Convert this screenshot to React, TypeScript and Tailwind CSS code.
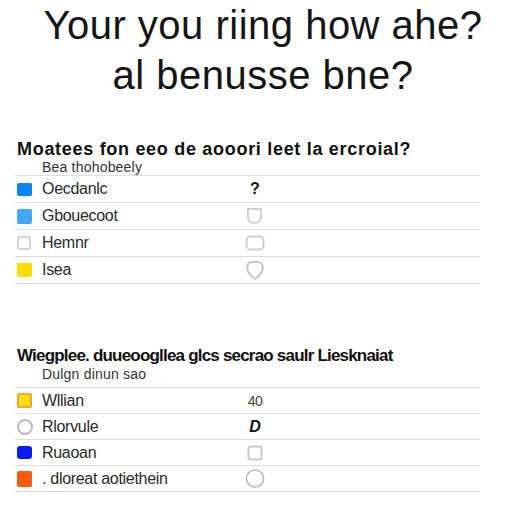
import React from "react";

type Marker = "blue" | "sky" | "empty" | "yellow" | "amber" | "ring" | "navy" | "orange";
type Answer = "q" | "shield" | "box" | "round" | "forty" | "d" | "square" | "circle";

type Row = { marker: Marker; label: string; answer: Answer };

const sections: {
  title: string;
  hint: string;
  rows: Row[];
  wrap: string;
  titleCls: string;
  hintCls: string;
  rowH: string;
}[] = [
  {
    title: "Moatees fon eeo de aooori leet la ercroial?",
    hint: "Bea thohobeely",
    wrap: "",
    titleCls: "text-[18px] tracking-[0.7px]",
    hintCls: "pb-0",
    rowH: "h-[27px]",
    rows: [
      { marker: "blue", label: "Oecdanlc", answer: "q" },
      { marker: "sky", label: "Gbouecoot", answer: "shield" },
      { marker: "empty", label: "Hemnr", answer: "box" },
      { marker: "yellow", label: "Isea", answer: "round" },
    ],
  },
  {
    title: "Wiegplee. duueoogllea glcs secrao saulr Liesknaiat",
    hint: "Dulgn dinun sao",
    wrap: "mt-[3px]",
    titleCls: "text-[17px] tracking-[-0.8px]",
    hintCls: "pb-[5px]",
    rowH: "h-[26px]",
    rows: [
      { marker: "amber", label: "Wllian", answer: "forty" },
      { marker: "ring", label: "Rlorvule", answer: "d" },
      { marker: "navy", label: "Ruaoan", answer: "square" },
      { marker: "orange", label: ". dloreat aotiethein", answer: "circle" },
    ],
  },
];

const MarkerIcon: React.FC<{ kind: Marker }> = ({ kind }) => {
  switch (kind) {
    case "blue":
      return <span className="block h-[13px] w-[15px] rounded-[2px] bg-[#0a84f5]" />;
    case "sky":
      return <span className="block h-[15px] w-[15px] rounded-[2px] bg-[#3fa9f7]" />;
    case "empty":
      return <span className="block h-[14px] w-[14px] rounded-[3px] border-2 border-[#d4d4d4] bg-white" />;
    case "yellow":
      return <span className="block h-[14px] w-[15px] rounded-[2px] bg-[#ffdc00]" />;
    case "amber":
      return <span className="block h-[15px] w-[15px] rounded-[2px] border-2 border-[#f2a33a] bg-[#ffe000]" />;
    case "ring":
      return <span className="block h-[16px] w-[16px] rounded-full border-2 border-[#b9b9b9] bg-white" />;
    case "navy":
      return <span className="block h-[13px] w-[15px] rounded-[3px] bg-[#0a1cf2]" />;
    case "orange":
      return <span className="block h-[16px] w-[15px] rounded-[2px] bg-[#ff5a12]" />;
  }
};

const AnswerIcon: React.FC<{ kind: Answer }> = ({ kind }) => {
  switch (kind) {
    case "q":
      return <span className="text-[16px] font-black leading-none text-[#111]">?</span>;
    case "forty":
      return <span className="text-[14px] leading-none tracking-[-0.5px] text-[#444]">40</span>;
    case "d":
      return <span className="text-[16px] font-black italic leading-none text-[#111]">D</span>;
    case "shield":
      return (
        <svg width="18" height="18" viewBox="0 0 18 18" fill="none" stroke="#cfcfcf" strokeWidth="2">
          <path d="M2 2h13v8c0 4-3 6-6.5 6S2 14 2 10z" strokeLinejoin="round" />
        </svg>
      );
    case "box":
      return (
        <svg width="20" height="16" viewBox="0 0 20 16" fill="none" stroke="#cdcdcd" strokeWidth="2">
          <rect x="1.5" y="1.5" width="17" height="13" rx="4" />
        </svg>
      );
    case "round":
      return (
        <svg width="20" height="22" viewBox="0 0 20 22" fill="none" stroke="#c7c7c7" strokeWidth="2">
          <path d="M3 5c2-3 12-3 14 0 2 4 0 11-7 15C3 16 1 9 3 5z" strokeLinejoin="round" />
        </svg>
      );
    case "square":
      return (
        <svg width="16" height="16" viewBox="0 0 16 16" fill="none" stroke="#c9c9c9" strokeWidth="2">
          <rect x="1.5" y="1.5" width="13" height="13" rx="2" />
        </svg>
      );
    case "circle":
      return (
        <svg width="21" height="21" viewBox="0 0 21 21" fill="none" stroke="#b5b5b5" strokeWidth="1.6">
          <circle cx="10.5" cy="10.5" r="9" />
        </svg>
      );
  }
};

export default function App() {
  return (
    <div className="h-[512px] w-[512px] overflow-hidden bg-white font-['Liberation_Sans',Arial,sans-serif] text-[#1a1a1a]">
      <h1 className="pl-[14px] text-center text-[40px] font-normal leading-[50px] tracking-[0.5px] text-[#151515]">
        Your you riing how ahe?
        <br />
        al benusse bne?
      </h1>

      <div className="mt-[38px] flex flex-col gap-[58px] pl-[15px] pr-[32px]">
        {sections.map((section, i) => (
          <div key={i} className={section.wrap}>
            <h2 className={`pl-[2px] font-bold leading-[22px] text-[#111] ${section.titleCls}`}>
              {section.title}
            </h2>
            <div
              className={`border-b border-[#dedede] pl-[27px] text-[14px] leading-[15px] tracking-[0.2px] text-[#333] ${section.hintCls}`}
            >
              {section.hint}
            </div>
            {section.rows.map((row, j) => (
              <div
                key={j}
                className={`flex ${section.rowH} items-center border-b border-[#dcdcdc]`}
              >
                <div className="flex w-[27px] items-center pl-[2px]">
                  <MarkerIcon kind={row.marker} />
                </div>
                <div className="w-[203px] text-[16px] leading-none tracking-[-0.3px] text-[#2a2a2a]">
                  {row.label}
                </div>
                <div className="flex w-[20px] items-center justify-center">
                  <AnswerIcon kind={row.answer} />
                </div>
              </div>
            ))}
          </div>
        ))}
      </div>
    </div>
  );
}
